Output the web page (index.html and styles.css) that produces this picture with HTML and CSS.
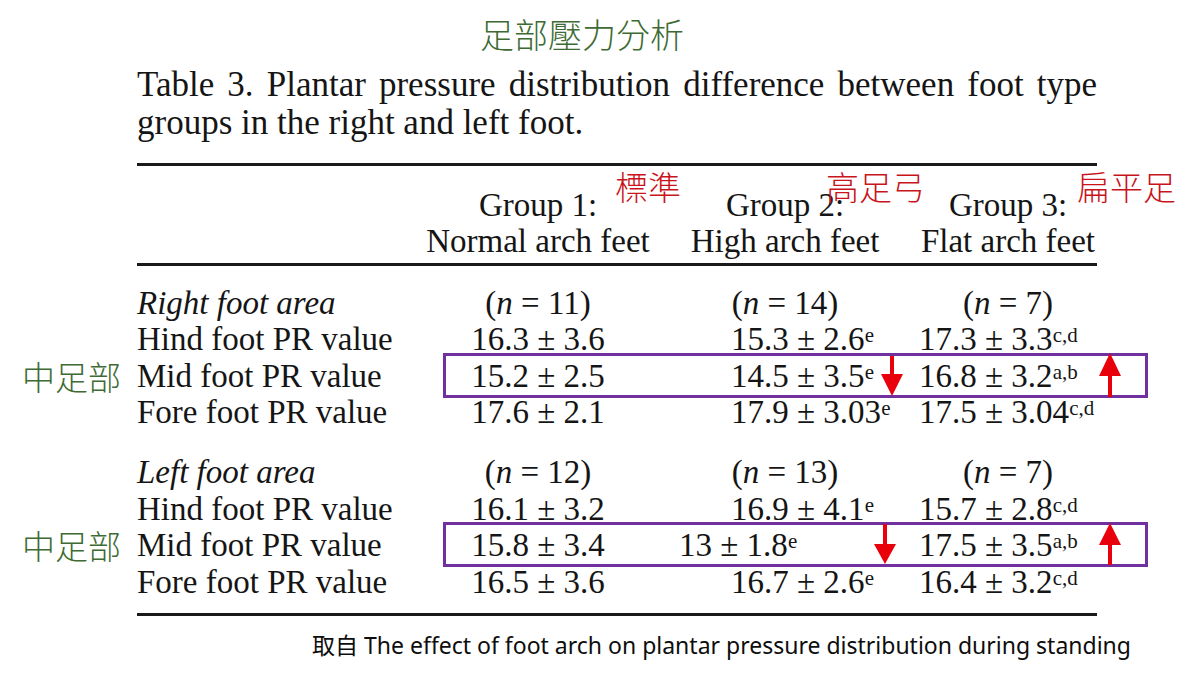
FILE: index.html
```html
<!DOCTYPE html>
<html lang="zh-Hant">
<head>
<meta charset="utf-8">
<title>足部壓力分析</title>
<link rel="stylesheet" href="styles.css">
</head>
<body>
<div class="page">
  <h1 class="title">足部壓力分析</h1>
  <p class="caption" lang="en">Table 3. Plantar pressure distribution difference between foot type groups in the right and left foot.</p>

  <div class="table" lang="en">
    <div class="thead">
      <div class="grid">
        <div></div>
        <div class="c">Group 1:</div>
        <div class="c">Group 2:</div>
        <div class="c">Group 3:</div>
        <div></div>
        <div class="c">Normal arch feet</div>
        <div class="c">High arch feet</div>
        <div class="c">Flat arch feet</div>
      </div>
    </div>
    <div class="tbody">
      <div class="grid section">
        <div class="it">Right foot area</div>
        <div class="c">(<i>n</i> = 11)</div>
        <div class="c">(<i>n</i> = 14)</div>
        <div class="c">(<i>n</i> = 7)</div>

        <div>Hind foot PR value</div>
        <div class="c">16.3 ± 3.6</div>
        <div class="v2">15.3 ± 2.6<sup>e</sup></div>
        <div>17.3 ± 3.3<sup>c,d</sup></div>

        <div>Mid foot PR value</div>
        <div class="c">15.2 ± 2.5</div>
        <div class="v2">14.5 ± 3.5<sup>e</sup></div>
        <div>16.8 ± 3.2<sup>a,b</sup></div>

        <div>Fore foot PR value</div>
        <div class="c">17.6 ± 2.1</div>
        <div class="v2">17.9 ± 3.03<sup>e</sup></div>
        <div>17.5 ± 3.04<sup>c,d</sup></div>
      </div>
      <div class="grid section second">
        <div class="it">Left foot area</div>
        <div class="c">(<i>n</i> = 12)</div>
        <div class="c">(<i>n</i> = 13)</div>
        <div class="c">(<i>n</i> = 7)</div>

        <div>Hind foot PR value</div>
        <div class="c">16.1 ± 3.2</div>
        <div class="v2">16.9 ± 4.1<sup>e</sup></div>
        <div>15.7 ± 2.8<sup>c,d</sup></div>

        <div>Mid foot PR value</div>
        <div class="c">15.8 ± 3.4</div>
        <div class="v2 short">13 ± 1.8<sup>e</sup></div>
        <div>17.5 ± 3.5<sup>a,b</sup></div>

        <div>Fore foot PR value</div>
        <div class="c">16.5 ± 3.6</div>
        <div class="v2">16.7 ± 2.6<sup>e</sup></div>
        <div>16.4 ± 3.2<sup>c,d</sup></div>
      </div>
    </div>
  </div>

  <p class="source">取自 The effect of foot arch on plantar pressure distribution during standing</p>

  <span class="note red n1">標準</span>
  <span class="note red n2">高足弓</span>
  <span class="note red n3">扁平足</span>
  <span class="note green g1">中足部</span>
  <span class="note green g2">中足部</span>

  <div class="box b1"></div>
  <div class="box b2"></div>

  <svg class="arrow a1" width="24" height="42" viewBox="0 0 24 42"><rect x="10" y="0" width="4" height="20" fill="#e8000b"/><polygon points="1,18 23,18 12,40" fill="#e8000b"/></svg>
  <svg class="arrow a2" width="24" height="44" viewBox="0 0 24 44"><polygon points="12,0 1,23 23,23" fill="#e8000b"/><rect x="10" y="20" width="4" height="24" fill="#e8000b"/></svg>
  <svg class="arrow a3" width="24" height="42" viewBox="0 0 24 42"><rect x="10" y="0" width="4" height="22" fill="#e8000b"/><polygon points="1,20 23,20 12,40" fill="#e8000b"/></svg>
  <svg class="arrow a4" width="24" height="42" viewBox="0 0 24 42"><polygon points="12,0 1,22 23,22" fill="#e8000b"/><rect x="10" y="20" width="4" height="22" fill="#e8000b"/></svg>
</div>
</body>
</html>
```

FILE: styles.css
```css
* { box-sizing: border-box; }
html, body { margin: 0; padding: 0; background: #fff; }
.page {
  position: relative;
  width: 1200px;
  height: 678px;
  overflow: hidden;
  font-family: "Liberation Serif", "Times New Roman", serif;
  color: #151515;
}
.title {
  margin: 0;
  padding: 14px 36px 0 0;
  text-align: center;
  font-family: "Noto Sans CJK TC", "Noto Sans CJK SC", sans-serif;
  font-weight: 300;
  font-size: 34px;
  line-height: 40px;
  color: #3d6b33;
}
.caption {
  margin: 12px 0 0 137px;
  width: 960px;
  font-size: 35px;
  line-height: 38px;
  text-align: justify;
}
.table {
  margin: 21px 0 0 137px;
  width: 960px;
  border-top: 3px solid #1a1a1a;
  border-bottom: 3px solid #1a1a1a;
  font-size: 33px;
  line-height: 36.4px;
}
.thead {
  padding: 21px 0 3px;
  border-bottom: 3px solid #1a1a1a;
}
.tbody {
  padding: 19px 0 13px;
}
.grid {
  display: grid;
  grid-template-columns: 288px 226px 268px 178px;
  white-space: nowrap;
}
.second { margin-top: 24px; }
.c { text-align: center; }
.it { font-style: italic; }
.v2 { padding-left: 80px; }
.v2.short { padding-left: 28px; }
sup {
  font-family: "Liberation Serif", "Times New Roman", serif;
  font-size: 21px;
  line-height: 0;
  vertical-align: 0.4em;
}
.source {
  margin: 15px 0 0 312px;
  font-family: "Noto Sans", "Noto Sans CJK TC", sans-serif;
  font-size: 23px;
  line-height: 28px;
  color: #0d0d0d;
  white-space: nowrap;
}
.note {
  position: absolute;
  font-family: "Noto Sans CJK TC", "Noto Sans CJK SC", sans-serif;
  font-weight: 300;
  font-size: 33px;
  line-height: 36px;
  white-space: nowrap;
}
.red { color: #c9141c; }
.green { color: #3d6b33; }
.n1 { left: 615px; top: 168px; }
.n2 { left: 826px; top: 168px; }
.n3 { left: 1077px; top: 168px; }
.g1 { left: 22px; top: 358px; }
.g2 { left: 22px; top: 527px; }
.box {
  position: absolute;
  left: 443px;
  width: 705px;
  height: 45px;
  border: 3px solid #7030a0;
}
.b1 { top: 353px; }
.b2 { top: 522px; }
.arrow { position: absolute; }
.a1 { left: 880px; top: 356px; }
.a2 { left: 1098px; top: 353px; }
.a3 { left: 873px; top: 524px; }
.a4 { left: 1098px; top: 523px; }
```
